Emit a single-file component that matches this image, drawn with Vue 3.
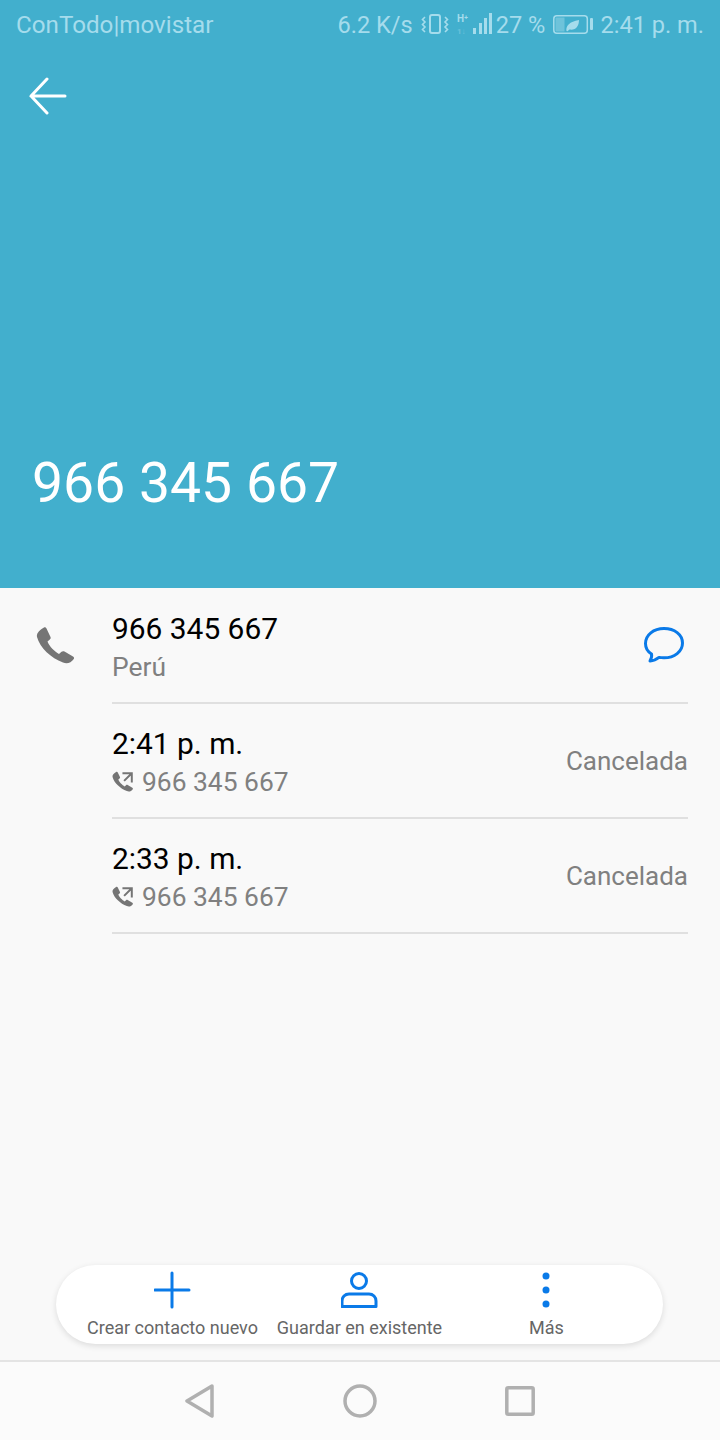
<script setup>
const calls = [
  { id: 1, time: '2:41 p. m.', number: '966 345 667', state: 'Cancelada' },
  { id: 2, time: '2:33 p. m.', number: '966 345 667', state: 'Cancelada' }
]
const handset = 'M1 11C.5 8 2 5 8 1.500 9 1 10 1.500 10.500 2.500L14.500 11C15 12 14.500 13 13.800 13.500L11.500 15.500C13 20 19 26 23 28L25.500 25.800C26.300 25 27.500 25 28.500 25.500L37 30.500C38 31 38.300 32 37.800 33 35 37 31 38 27 36.500 15 32 4 22 1 11Z'
</script>

<template>
  <div class="screen">
    <header class="hero">
      <div class="status">
        <span class="carrier">ConTodo|movistar</span>
        <div class="status-right">
          <span>6.2 K/s</span>
          <svg class="ic-vibrate" width="28" height="24" viewBox="0 0 28 24" fill="none" stroke="#a5dcec">
            <rect x="9" y="2" width="10" height="18" rx="2" stroke-width="2" />
            <path d="M4 4 1.500 6.500 4 9l-2.500 2.500L4 14l-2.500 2.500L4 19M24 4l2.500 2.500L24 9l2.500 2.500L24 14l2.500 2.500L24 19" stroke-width="1.600" />
          </svg>
          <svg class="ic-signal" width="36" height="24" viewBox="0 0 36 24">
            <text x="0" y="9" class="net">H⁺</text>
            <text x="0" y="21" class="net net-dim">1↓</text>
            <rect x="16" y="15" width="3" height="6" fill="#a5dcec" />
            <rect x="22" y="10" width="3" height="11" fill="#a5dcec" />
            <rect x="27" y="5" width="3" height="16" fill="#a5dcec" />
            <rect x="32" y="0" width="3" height="21" fill="#a5dcec" />
          </svg>
          <span class="pct">27 %</span>
          <svg class="ic-battery" width="40" height="24" viewBox="0 0 40 24">
            <rect x="0.800" y="2.800" width="33.500" height="17.500" rx="3" fill="none" stroke="#a5dcec" stroke-width="1.500" />
            <rect x="2.500" y="4.500" width="9" height="14" fill="#a5dcec" opacity="0.45" />
            <path d="M13.500 18c-1-5 3-9.500 12.500-11 0 6.500-3.500 10.500-9.500 9.500l-2 1.800z" fill="#a5dcec" />
            <rect x="37" y="5" width="3" height="12" rx="1" fill="#a5dcec" />
          </svg>
          <span class="clock">2:41 p. m.</span>
        </div>
      </div>
      <button class="back">
        <svg width="38" height="38" viewBox="0 0 38 38" fill="none" stroke="#fff" stroke-width="3" stroke-linecap="round">
          <path d="M2 19h34M18 2 2 19l16 17" />
        </svg>
      </button>
      <h1 class="hero-number">966 345 667</h1>
    </header>

    <main class="details">
      <div class="row">
        <svg class="ic-phone" width="40" height="40" viewBox="0 0 40 40">
          <path fill="#757575" :d="handset" />
        </svg>
        <div class="row-body">
          <div class="row-text">
            <div class="primary">966 345 667</div>
            <div class="secondary">Perú</div>
          </div>
          <svg class="ic-chat" width="42" height="40" viewBox="0 0 42 40" fill="none" stroke="#0a7ae8" stroke-width="3" stroke-linejoin="round">
            <path d="M21 2.500C10.500 2.500 2.500 9 2.500 17.500c0 4.500 2.200 8.200 6 10.500.6 2-.2 4.500-1.500 7 3.500-.2 6.500-1.500 9-3.600 1.500.3 3.200.4 5 .4 10.500 0 18.500-6.300 18.500-14.800S31.500 2.500 21 2.500z" />
          </svg>
        </div>
      </div>

      <div v-for="call in calls" :key="call.id" class="row">
        <div class="row-spacer"></div>
        <div class="row-body">
          <div class="row-text">
            <div class="primary">{{ call.time }}</div>
            <div class="secondary with-icon">
              <svg width="22" height="22" viewBox="0 0 40 40">
                <path fill="#757575" :d="handset" />
                <path d="M19 4h17v17M35 5 22 18" fill="none" stroke="#757575" stroke-width="3.600" />
              </svg>
              <span>{{ call.number }}</span>
            </div>
          </div>
          <span class="state">{{ call.state }}</span>
        </div>
      </div>
    </main>

    <div class="actions-wrap">
      <nav class="actions">
        <div class="action">
          <svg width="38" height="38" viewBox="1 0 38 38" stroke="#0a7ae8" stroke-width="3" stroke-linecap="round" fill="none">
            <path d="M19 2v34M2 19h34" />
          </svg>
          <span>Crear contacto nuevo</span>
        </div>
        <div class="action">
          <svg width="38" height="38" viewBox="1 0 38 38" stroke="#0a7ae8" stroke-width="3" fill="none">
            <circle cx="19" cy="10" r="7.500" />
            <path d="M2 35.500V30c0-4 3-7 7-7h20c4 0 7 3 7 7v5.500z" stroke-linejoin="round" />
          </svg>
          <span>Guardar en existente</span>
        </div>
        <div class="action">
          <svg width="38" height="38" viewBox="1 0 38 38" fill="#0a7ae8">
            <circle cx="19" cy="5" r="3.500" />
            <circle cx="19" cy="19" r="3.500" />
            <circle cx="19" cy="33" r="3.500" />
          </svg>
          <span>Más</span>
        </div>
      </nav>
    </div>

    <footer class="navbar">
      <svg width="32" height="34" viewBox="0 0 32 34" fill="none" stroke="#b0b0b0" stroke-width="3.500" stroke-linejoin="round">
        <path d="M28 2 3 17l25 15z" />
      </svg>
      <svg width="34" height="34" viewBox="0 0 34 34" fill="none" stroke="#b0b0b0" stroke-width="3.500">
        <circle cx="17" cy="17" r="15" />
      </svg>
      <svg width="30" height="30" viewBox="0 0 30 30" fill="none" stroke="#b0b0b0" stroke-width="3.500" stroke-linejoin="round">
        <rect x="1.800" y="1.800" width="26.400" height="26.400" rx="1.500" />
      </svg>
    </footer>
  </div>
</template>

<style>
html, body {
  margin: 0;
  background: #f9f9f9;
}
</style>

<style scoped>
.screen {
  width: 720px;
  height: 1440px;
  display: flex;
  flex-direction: column;
  background: #f9f9f9;
  font-family: Roboto, "Liberation Sans", sans-serif;
  overflow: hidden;
}
.hero {
  height: 588px;
  flex: none;
  display: flex;
  flex-direction: column;
  background: #42afcd;
  box-sizing: border-box;
}
.status {
  height: 50px;
  display: flex;
  align-items: center;
  justify-content: space-between;
  padding: 0 16px;
  color: #a5dcec;
  font-size: 23.6px;
}
.carrier {
  font-size: 24.2px;
}
.status-right {
  display: flex;
  align-items: center;
}
.ic-vibrate {
  margin-left: 8px;
}
.ic-signal {
  margin-left: 8px;
}
.pct {
  margin-left: 3px;
}
.ic-battery {
  margin-left: 8px;
}
.clock {
  margin-left: 7px;
}
.net {
  font-size: 10px;
  font-weight: 700;
  fill: #a5dcec;
}
.net-dim {
  font-size: 8px;
  opacity: 0.4;
}
.back {
  align-self: flex-start;
  margin: 27px 0 0 29px;
  padding: 0;
  border: 0;
  background: none;
  height: 38px;
}
.hero-number {
  margin: auto 0 0 32px;
  padding-bottom: 72px;
  color: #fff;
  font-size: 55.3px;
  font-weight: 400;
  line-height: 64px;
}
.details {
  flex: 1;
  padding-top: 1px;
}
.row {
  display: flex;
  padding-left: 36px;
}
.ic-phone {
  flex: none;
  margin: 37px 36px 0 0;
}
.row-spacer {
  width: 76px;
  flex: none;
}
.row-body {
  flex: 1;
  height: 115px;
  margin-right: 32px;
  display: flex;
  align-items: center;
  justify-content: space-between;
  box-sizing: border-box;
  border-bottom: 2px solid #e0e0e0;
}
.row-text {
  padding-top: 4px;
}
.primary {
  color: #000;
  font-size: 29.900px;
  line-height: 38px;
}
.secondary {
  color: #808080;
  font-size: 26.400px;
  line-height: 38px;
}
.with-icon {
  display: flex;
  align-items: center;
  gap: 8px;
}
.state {
  color: #808080;
  font-size: 26px;
}
.ic-chat {
  margin-right: 3px;
}
.actions-wrap {
  display: flex;
  justify-content: center;
  padding: 0 57px 16px 56px;
}
.actions {
  flex: 1;
  height: 79px;
  display: grid;
  grid-template-columns: repeat(3, 187px);
  justify-content: center;
  background: #fff;
  border-radius: 40px;
  box-shadow: 0 2px 6px rgba(0, 0, 0, 0.12);
  box-sizing: border-box;
  padding-top: 6px;
}
.action {
  display: flex;
  flex-direction: column;
  align-items: center;
  gap: 8px;
  color: #666;
  font-size: 18px;
  line-height: 22px;
  white-space: nowrap;
}
.navbar {
  height: 80px;
  flex: none;
  box-sizing: border-box;
  border-top: 2px solid #e4e4e4;
  background: #fbfbfb;
  display: grid;
  grid-template-columns: repeat(3, 160px);
  justify-content: center;
  justify-items: center;
  align-items: center;
}
</style>
